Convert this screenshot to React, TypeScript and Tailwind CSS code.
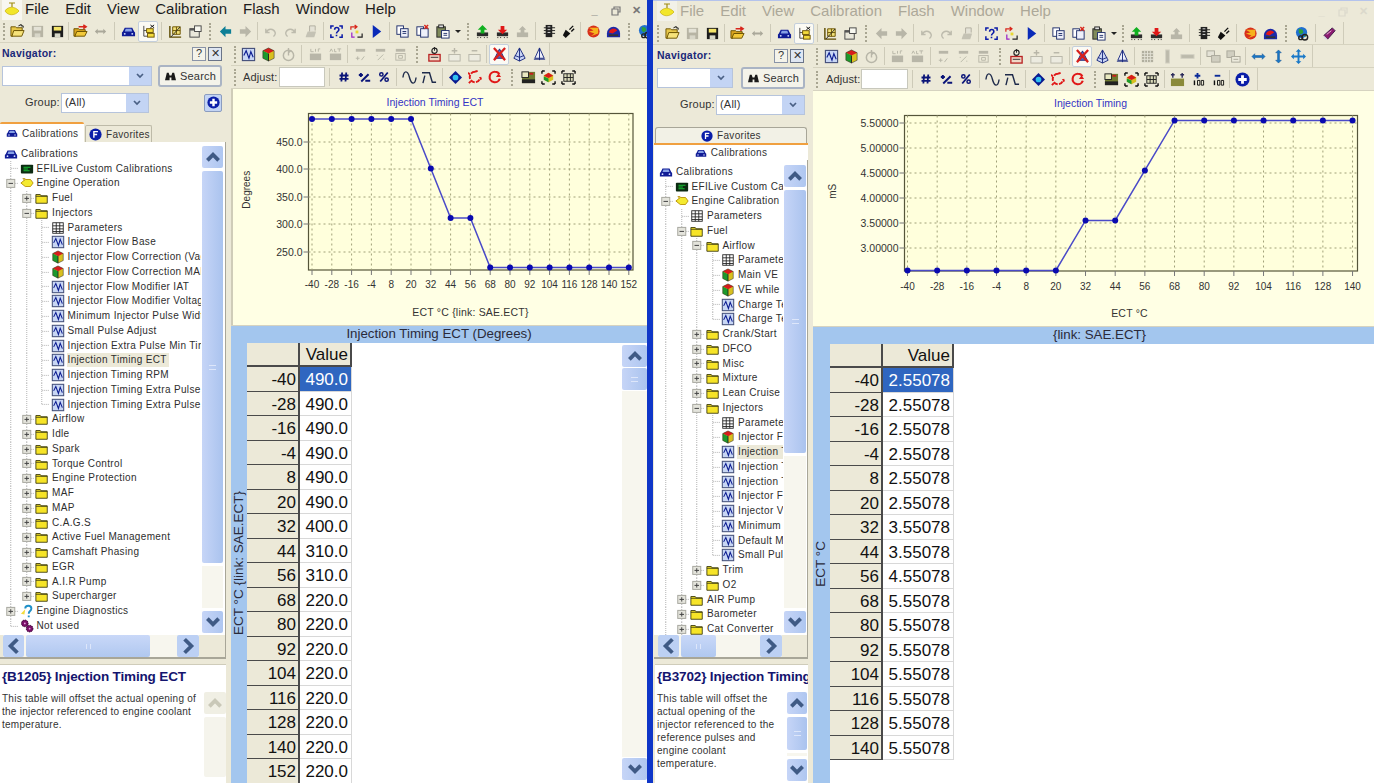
import type { ReactNode } from 'react';

const folderPath = 'M1 4h5l1 1.5h7V14H1z';
const I: Record<string, ReactNode> = {
  open: <><path d="M1 3h5l1 1h6v3H5L3 13H1z" fill="#e8c84a" stroke="#6b5200" /><path d="M4 7h11l-2.500 6H2z" fill="#f6e27a" stroke="#6b5200" /><path d="M9 2l3-1.500v1.500h2v2" fill="none" stroke="#111" /></>,
  saveG: <><rect x="2" y="2" width="12" height="12" fill="#b7b4a4" /><rect x="4" y="3" width="8" height="4" fill="#e4e2d6" /><rect x="5" y="10" width="6" height="4" fill="#d8d6c8" /></>,
  saveB: <><rect x="2" y="2" width="12" height="12" fill="#1b1b1b" /><rect x="4" y="3" width="8" height="4" fill="#f4e46a" /><rect x="5" y="10" width="6" height="4" fill="#d7d7c8" /></>,
  openR: <><path d="M1 5h5l1 1h6v2H5l-2 5H1z" fill="#d9a520" stroke="#6b5200" /><path d="M4 8h11l-2.500 5H2z" fill="#f2c93a" stroke="#6b5200" /><path d="M6 3h7M11 1l3 2-3 2" fill="none" stroke="#d8261c" strokeWidth="1.600" /></>,
  arrows: <path d="M2 8l3-3v2h6V5l3 3-3 3V9H5v2z" fill="#aaa89a" />,
  car: <><path d="M1 9l1-1 2-4h8l2 4 1 1v4H1z" fill="#101c96" /><path d="M5 5h6l1 3H4z" fill="#86a0e6" /><circle cx="4" cy="10.500" r="1" fill="#d7e0ff" /><circle cx="12" cy="10.500" r="1" fill="#d7e0ff" /></>,
  tree: <><path d="M3 2v11h4M3 7h4" fill="none" stroke="#444" /><rect x="6" y="5" width="7" height="4" fill="#f4dc3c" stroke="#6b5200" /><rect x="7" y="10" width="7" height="4" fill="#f4dc3c" stroke="#6b5200" /><path d="M10 1l4 3M14 1l-4 3" stroke="#111" /></>,
  grid: <><path d="M2 2v12h12" fill="none" stroke="#5c4a00" strokeWidth="1.500" /><path d="M5 3h8v8H5zM5 7h8M9 3v8" fill="#f2e27a" stroke="#6b5200" /><path d="M3 14l10-11" stroke="#2c2c2c" /></>,
  prop: <><rect x="2" y="5" width="10" height="9" fill="#e9e7da" stroke="#444" /><rect x="2" y="5" width="10" height="2" fill="#555" /><rect x="7" y="2" width="7" height="6" fill="#f8f8f0" stroke="#444" /></>,
  left: <path d="M2 8l6-6v3.500h6v5H8V14z" fill="#0d7f96" />,
  leftG: <path d="M2 8l6-6v3.500h6v5H8V14z" fill="#b8b6a8" />,
  rightG: <path d="M14 8L8 2v3.500H2v5h6V14z" fill="#b8b6a8" />,
  undo: <path d="M3 5v4h4M3.500 9C5 5 11 4 13 9c.5 2-1 4-2 4" fill="none" stroke="#bdbbad" strokeWidth="1.500" />,
  redo: <path d="M13 5v4H9M12.500 9C11 5 5 4 3 9c-.5 2 1 4 2 4" fill="none" stroke="#bdbbad" strokeWidth="1.500" />,
  docG: <><path d="M3 13l2-5h9l-2 6H3z" fill="#c4c2b4" /><path d="M7 8V2h6v5" fill="#e4e2d6" stroke="#b0aea0" /></>,
  help: <><path d="M5 2H2v3M11 2h3v3M5 14H2v-3M11 14h3v-3" fill="none" stroke="#0a1aa8" strokeWidth="1.600" /><path d="M6 6c0-3 4.500-3 4.500 0 0 2-2.500 2-2.500 4M8 11.500V13" fill="none" stroke="#0a1aa8" strokeWidth="1.700" /></>,
  swap: <><path d="M2 6V3h6M6 1l2.500 2L6 5" fill="none" stroke="#d8261c" strokeWidth="1.300" /><path d="M3 9v5h3" fill="none" stroke="#9a22c8" strokeWidth="1.300" /><path d="M14 10v4H9" fill="none" stroke="#222" strokeWidth="1.300" /><rect x="7" y="7" width="3" height="3" fill="#e8d830" /></>,
  play: <path d="M4 1l9 7-9 7z" fill="#0a2ab8" />,
  copy: <><rect x="2" y="2" width="7" height="9" fill="#fff" stroke="#1d2d6a" /><rect x="6" y="5" width="8" height="9" fill="#eef0fa" stroke="#1d2d6a" /><path d="M8 8h4M8 10h4" stroke="#1d2d6a" /></>,
  copy2: <><rect x="2" y="3" width="7" height="9" fill="#fff" stroke="#1d2d6a" /><rect x="6" y="5" width="8" height="9" fill="#eef0fa" stroke="#1d2d6a" /><path d="M10 1l4 4M14 1l-4 4" stroke="#d8261c" strokeWidth="1.500" /></>,
  paste: <><rect x="2" y="3" width="9" height="11" fill="#7f8a5a" stroke="#222" /><rect x="4" y="1" width="5" height="3" fill="#ddd" stroke="#222" /><rect x="7" y="7" width="8" height="8" fill="#fff" stroke="#1d2d6a" /><path d="M9 10h4M9 12h4" stroke="#1d2d6a" /></>,
  chipG: <><path d="M2 9h12v4H2z" fill="#2c2c2c" /><path d="M3 14v1M6 14v1M10 14v1M13 14v1" stroke="#222" /><path d="M8 1l5 5h-3v4H6V6H3z" fill="#10b020" /></>,
  chipR: <><path d="M2 9h12v4H2z" fill="#2c2c2c" /><path d="M3 14v1M6 14v1M10 14v1M13 14v1" stroke="#222" /><path d="M8 1l5 5h-3v4H6V6H3z" fill="#e01818" transform="rotate(180 8 6)" /></>,
  chipGy: <><path d="M2 9h12v5H2z" fill="#b8b6a8" /><path d="M8 2l4 4h-2v4H6V6H4z" fill="#b8b6a8" /></>,
  jack: <><rect x="5" y="1" width="7" height="13" fill="#222" /><path d="M3 4h12M3 7h12M3 10h12" stroke="#222" /><path d="M7 3h3M7 6h3M7 9h3" stroke="#ddd" /></>,
  plug: <><path d="M2 12l3-6 5 4-5 5z" fill="#111" /><path d="M9 6l4-4M11 8l3-3" stroke="#111" strokeWidth="1.500" /></>,
  burn: <><circle cx="8" cy="8" r="6.500" fill="#d8301c" /><path d="M3 4l5 3-5 1 6 2-4 3 8-3V4z" fill="#f6b21c" /></>,
  gauge: <><path d="M1 10a7 7 0 0114 0v4H1z" fill="#1c2aa8" /><path d="M3 9a5 5 0 019-2l-5 3z" fill="#e01818" /><path d="M3 11h10v2H3z" fill="#333" /></>,
  globe: <><circle cx="7" cy="7" r="6" fill="#2070d0" /><path d="M4 3l4 1 1 3-3 2-2-2zM9 9l3-1-1 4z" fill="#2ea03a" /><circle cx="10.500" cy="12" r="3" fill="none" stroke="#222" strokeWidth="1.500" /><circle cx="6" cy="12.500" r="2" fill="none" stroke="#222" strokeWidth="1.500" /></>,
  book: <><path d="M2 10l9-8 3 3-8 9z" fill="#8b1a70" stroke="#40204a" /><path d="M2 10l1 4h3z" fill="#d8d4e8" /><path d="M5 9l5-4" stroke="#e9b0d8" /></>,
  chart: <><rect x="1.500" y="1.500" width="13" height="13" fill="#c8d6f4" stroke="#45507a" strokeWidth="1.200" /><path d="M3 9l2.500-5 3 8 2-7 2.500 6" fill="none" stroke="#0a1a90" strokeWidth="1.200" /></>,
  cube: <><path d="M8 1l6 3v8l-6 3-6-3V4z" fill="#d8c020" /><path d="M8 1l6 3-6 3-6-3z" fill="#d81c1c" /><path d="M2 4l6 3v8l-6-3z" fill="#1c9a2c" /><path d="M8 7v8" stroke="#222" /><path d="M2 4l6-3 6 3v8l-6 3-6-3z" fill="none" stroke="#333" strokeWidth=".6" /></>,
  hist: <><circle cx="8" cy="9" r="5.500" fill="none" stroke="#b8b6a8" strokeWidth="1.600" /><path d="M8 1v5l3-2.500M8 9V6" stroke="#b8b6a8" strokeWidth="1.500" fill="none" /></>,
  cal: <><rect x="2" y="7" width="12" height="7" fill="#b8b6a8" /><path d="M3 2v3h3M8 5V2M8 2h0M11 5V2h2" fill="none" stroke="#b8b6a8" /></>,
  alt: <><rect x="2" y="7" width="12" height="7" fill="#b8b6a8" /><path d="M2 5l1.500-3L5 5M7 2v3h2M10 2h4M12 2v3" fill="none" stroke="#b8b6a8" /></>,
  d1: <><rect x="3" y="2" width="10" height="3" fill="#b8b6a8" /><path d="M3 12h4M5 10v4M9 14l3-4" stroke="#b8b6a8" /></>,
  d2: <><rect x="3" y="2" width="10" height="3" fill="#b8b6a8" /><path d="M5 14l6-6M4 9h1M11 13h1" stroke="#b8b6a8" /></>,
  d3: <><rect x="3" y="2" width="10" height="3" fill="#b8b6a8" /><rect x="3" y="7" width="10" height="7" fill="none" stroke="#b8b6a8" /><path d="M6 9h4v3H6z" fill="none" stroke="#b8b6a8" /></>,
  flash: <><rect x="2" y="8" width="12" height="7" fill="#f0d8c8" stroke="#b82020" strokeWidth="1.400" /><path d="M4 11h8" stroke="#333" /><circle cx="8" cy="4" r="2.800" fill="none" stroke="#222" strokeWidth="1.200" /><path d="M8 0v4" stroke="#222" /></>,
  addG: <><rect x="2" y="8" width="12" height="7" fill="#ecebe0" stroke="#b8b6a8" /><path d="M8 1v6M5 4h6" stroke="#b8b6a8" strokeWidth="1.500" /></>,
  subG: <><rect x="2" y="8" width="12" height="7" fill="#ecebe0" stroke="#b8b6a8" /><path d="M5 4h6" stroke="#b8b6a8" strokeWidth="1.500" /></>,
  x3d: <><path d="M8 2l5 10H3z" fill="#5b6ac8" stroke="#1a2070" /><path d="M2 1l12 13M14 1L2 14" stroke="#d8201c" strokeWidth="2.400" /></>,
  cone1: <><path d="M8 1l6 11-6 3-6-3z" fill="#c8d4f4" stroke="#1a2a80" /><path d="M8 1v14M3 9l5 2 5-2" fill="none" stroke="#1a2a80" /></>,
  cone2: <><path d="M8 1l5 11H3z" fill="#eef0fa" stroke="#1a2a80" /><path d="M8 1v13M2 13h12" stroke="#1a2a80" /></>,
  gridG: <><rect x="2" y="2" width="12" height="12" fill="#b0ae9e" /><path d="M2 5h12M2 8h12M2 11h12M5 2v12M8 2v12M11 2v12" stroke="#e4e2d6" /></>,
  barV: <rect x="6" y="1" width="4" height="14" fill="#bcbaac" stroke="#d4d2c4" />,
  barH: <rect x="1" y="6" width="14" height="4" fill="#bcbaac" stroke="#d4d2c4" />,
  tbl1: <><rect x="1" y="2" width="8" height="6" fill="#e4e2d6" stroke="#aaa89a" /><rect x="6" y="7" width="9" height="7" fill="#d0cec0" stroke="#aaa89a" /></>,
  tbl2: <><rect x="1" y="2" width="8" height="7" fill="#d0cec0" stroke="#aaa89a" /><rect x="6" y="8" width="9" height="6" fill="#eceadc" stroke="#aaa89a" /><path d="M8 11h5" stroke="#aaa89a" /></>,
  arH: <path d="M1 8l3-3v2h8V5l3 3-3 3V9H4v2z" fill="#1878c8" stroke="#0a4a90" strokeWidth=".5" />,
  arV: <path d="M8 1l3 3H9v8h2l-3 3-3-3h2V4H5z" fill="#1878c8" stroke="#0a4a90" strokeWidth=".5" />,
  arAll: <path d="M8 0l3 3H9v4h4V5l3 3-3 3V9H9v4h2l-3 3-3-3h2V9H3v2L0 8l3-3v2h4V3H5z" fill="#1878c8" />,
  hash: <path d="M5.500 2L4.500 14M11 2l-1 12M2 6h12M2 10.500h12" stroke="#0a1478" strokeWidth="2.400" />,
  pm: <path d="M1 5h5M3.500 2.500v5M4 13L13 4M9 12h6" stroke="#0a1478" strokeWidth="2.400" />,
  pct: <><path d="M3 14L13 2" stroke="#0a1478" strokeWidth="2.400" /><circle cx="4.500" cy="4.500" r="2.200" fill="none" stroke="#0a1478" strokeWidth="2" /><circle cx="11.500" cy="11.500" r="2.200" fill="none" stroke="#0a1478" strokeWidth="2" /></>,
  wave: <path d="M1 8c1-8 5-8 7 0s6 8 7 0" fill="none" stroke="#1e2a4a" strokeWidth="1.500" />,
  step: <path d="M0 3h8l3 10h4M1 14l2-8" fill="none" stroke="#1e2a4a" strokeWidth="1.500" />,
  target: <><path d="M8 0l8 8-8 8-8-8z" fill="#0a1a90" /><circle cx="8" cy="8" r="3.500" fill="#30c0f0" /></>,
  ring: <path d="M8 2a6 6 0 106 6M8 2l3-1M14 8l1 3M2 5L0 3M3 13l-2 2" fill="none" stroke="#e01818" strokeWidth="2.200" strokeDasharray="5 1.500" />,
  rot: <><path d="M13.500 10A6 6 0 118 2c2 0 4 1 5 3" fill="none" stroke="#e01818" strokeWidth="2.400" /><path d="M15 8H9l3-4z" fill="#e01818" /></>,
  sel1: <><rect x="1" y="2" width="14" height="12" fill="#6f7a30" /><rect x="1" y="2" width="7" height="6" fill="#e8e8c0" stroke="#222" /><rect x="1" y="10" width="14" height="4" fill="#222" /><rect x="9" y="3" width="4" height="2" fill="#c81c1c" /></>,
  sel2: <><path d="M1 1h3M12 1h3M1 15h3M12 15h3M1 1v3M15 1v3M1 12v3M15 12v3" stroke="#111" strokeWidth="1.500" /><path d="M8 3l5 2.500v5L8 13l-5-2.500v-5z" fill="#d8c020" /><path d="M3 6l5 2.500L13 6 8 3z" fill="#d81c1c" /><path d="M8 9v4l-5-2.500V7z" fill="#1c9a2c" /></>,
  sel3: <><path d="M1 1h3M12 1h3M1 15h3M12 15h3M1 1v3M15 1v3M1 12v3M15 12v3" stroke="#111" strokeWidth="1.500" /><rect x="3" y="4" width="10" height="8" fill="#d8d8b8" stroke="#222" /><path d="M3 8h10M6.500 4v8M10 4v8" stroke="#222" /></>,
  flat: <><rect x="1" y="7" width="14" height="8" fill="#8a8a3a" /><path d="M1 3h4M3 1v5M11 3h4M13 1v5" stroke="#2a2a5a" strokeWidth="1.500" /></>,
  inc: <><path d="M8 1v6M5 4h6" stroke="#0a2a98" strokeWidth="2" /><rect x="4" y="9" width="1.500" height="5" fill="#111" /><path d="M8 9h2.500v5H8zM12 9h2.500v5H12z" fill="none" stroke="#111" /></>,
  dec: <><path d="M5 4h6" stroke="#0a2a98" strokeWidth="2" /><rect x="4" y="9" width="1.500" height="5" fill="#111" /><path d="M8 9h2.500v5H8zM12 9h2.500v5H12z" fill="none" stroke="#111" /></>,
  plus: <><circle cx="8" cy="8" r="7.500" fill="#0a1ea8" /><path d="M8 3.500v9M3.500 8h9" stroke="#fff" strokeWidth="3" /></>,
  favF: <><circle cx="8" cy="8" r="7.500" fill="#0a1ea8" /><path d="M6 12V4.500h5M6 8h4" fill="none" stroke="#fff" strokeWidth="1.700" /></>,
  efi: <><rect x="1" y="3" width="14" height="10" rx="1" fill="#0c2a12" /><path d="M4 6h8M4 8h5M4 10h7" stroke="#18d838" /></>,
  yellow: <><path d="M1 8l5-4h6l3 4-3 4H6z" fill="#f4ea30" stroke="#b89000" /><path d="M3 3h3M4.500 3v2" stroke="#b89000" /></>,
  folder: <><path d={folderPath} fill="#f6e428" stroke="#3c3a10" /><path d="M1 6h13" stroke="#3c3a10" /></>,
  table: <><rect x="2" y="2" width="12" height="12" fill="#fff" stroke="#222" /><path d="M2 5.500h12M2 9h12M2 12h12M6 2v12M10 2v12" stroke="#222" /></>,
  question: <><path d="M1 11l5-5-1 6z" fill="#f4dc3c" /><path d="M6 5c0-4 7-4 7 0 0 3-3 3-3 6M10 13v2" fill="none" stroke="#2090c8" strokeWidth="2.200" /></>,
  cogs: <><circle cx="5.500" cy="5" r="3.800" fill="#7a1068" stroke="#220022" strokeDasharray="1.500 1" /><circle cx="11" cy="11" r="3.800" fill="#7a1068" stroke="#220022" strokeDasharray="1.500 1" /><circle cx="5.500" cy="5" r="1" fill="#e8a0e0" /><circle cx="11" cy="11" r="1" fill="#e8a0e0" /></>,
  logo: <><path d="M1 9c3-5 10-5 14 0-4 5-11 5-14 0z" fill="#f2e62a" stroke="#c0a400" strokeWidth=".6" /><path d="M5 1h6M8 1v4" stroke="#a08c10" strokeWidth="1.200" /></>,
};

const Ico = ({ n, size = 'w-[16px] h-[16px]' }: { n: string; size?: string }) => (
  <svg viewBox="0 0 16 16" className={`${size} shrink-0`}>{I[n]}</svg>
);

const SEP: Record<string, string> = {
  s3: 'w-[3px]', s5: 'w-[5px]', s6: 'w-[6px]', s7: 'w-[7px]', s8: 'w-[8px]', s9: 'w-[9px]',
};
const GRIP: Record<string, string> = {
  g6: 'w-[6px]', g7: 'w-[7px]', g8: 'w-[8px]', g9: 'w-[9px]', g10: 'w-[10px]', g11: 'w-[11px]', g12: 'w-[12px]', g13: 'w-[13px]', g14: 'w-[14px]',
};
const SMALL: Record<string, string> = {
  hash: 'w-[12px] h-[12px]', pm: 'w-[13px] h-[13px]', pct: 'w-[12px] h-[12px]', target: 'w-[13px] h-[13px]', ring: 'w-[14px] h-[14px]', rot: 'w-[14px] h-[14px]',
};

function Bar({ items }: { items: string[] }) {
  return (
    <>
      {items.map((it, i) => {
        if (SEP[it]) return <div key={i} className={`${SEP[it]} h-[18px] flex justify-center shrink-0`}><div className="w-px h-full bg-[#cdcab8]" /></div>;
        if (GRIP[it]) return <div key={i} className={`${GRIP[it]} h-[17px] flex justify-center shrink-0`}><div className="h-full border-l-2 border-dotted border-[#a9a692]" /></div>;
        if (it === 'drop') return <div key={i} className="w-[12px] flex justify-center shrink-0"><div className="w-0 h-0 border-x-[3px] border-t-[3px] border-x-transparent border-t-[#222]" /></div>;
        const active = it.startsWith('!');
        const name = active ? it.slice(1) : it;
        return (
          <div key={i} className={`w-[20px] h-[21px] flex items-center justify-center shrink-0 ${active ? 'bg-[#fbfaf4] border border-[#c4cfdc] rounded-[2px]' : ''}`}>
            <Ico n={name} size={SMALL[name] ?? 'w-[15px] h-[15px]'} />
          </div>
        );
      })}
    </>
  );
}

const Menu = ({ dim }: { dim?: boolean }) => (
  <div className={`flex items-center gap-[16px] text-[15px] shrink-0 pb-[1px] ${dim ? 'h-[21px] pl-[4px] text-[#aca899]' : 'h-[20px] pl-[2px] text-[#1c1c1c]'}`}>
    <div className={`-mr-[13px] w-[20px] h-[20px] flex items-center justify-center ${dim ? 'bg-[#f2f1e8]' : 'bg-[#f8f7f0]'}`}><Ico n="logo" /></div>
    {['File', 'Edit', 'View', 'Calibration', 'Flash', 'Window', 'Help'].map((m) => <span key={m}>{m}</span>)}
  </div>
);

const Controls = ({ dim }: { dim?: boolean }) => (
  <div className={`flex items-center h-[20px] ${dim ? 'text-[#dbd9cc]' : 'text-[#777]'} text-[11px] font-bold`}>
    <span className="w-[21px] text-center">_</span>
    <span className="w-[21px] text-center">
      <svg viewBox="0 0 10 10" className="w-[10px] h-[10px] inline"><path d="M3 3V1h6v5H7M1 3h6v6H1z" fill="none" stroke="currentColor" strokeWidth="1.200" /></svg>
    </span>
    <span className="w-[21px] text-center">✕</span>
  </div>
);

const Chev = ({ dir, dim }: { dir: 'up' | 'down' | 'left' | 'right'; dim?: boolean }) => {
  const d = { up: 'M3 11l5-5 5 5', down: 'M3 5l5 5 5-5', left: 'M11 2L5 8l6 6', right: 'M5 2l6 6-6 6' }[dir];
  return <svg viewBox="0 0 16 16" className="w-[18px] h-[18px]"><path d={d} fill="none" stroke={dim ? '#c9c8b8' : '#3f5a85'} strokeWidth="3.400" /></svg>;
};

const SBtn = ({ dir, dim, h = 'h-[22px]' }: { dir: 'up' | 'down'; dim?: boolean; h?: string }) => (
  <div className={`${h} w-full shrink-0 flex items-center justify-center rounded-[2px] ${dim ? 'bg-[#f0efe4]' : 'bg-gradient-to-r from-[#c6d5f7] to-[#aec6f0]'}`}><Chev dir={dir} dim={dim} /></div>
);

function VScroll({ thumb, dim, className = '' }: { thumb: string; dim?: boolean; className?: string }) {
  return (
    <div className={`flex flex-col gap-[3px] ${className}`}>
      <SBtn dir="up" dim={dim} />
      <div className={`${thumb} flex items-center justify-center rounded-[2px] shrink-0 ${dim ? 'bg-[#f5f4ec]' : 'bg-gradient-to-r from-[#c6d5f7] to-[#aac3ee]'}`}>
        {!dim && <div className="w-[7px] h-[5px] border-y border-[#dde6fa]" />}
      </div>
      <div className={`flex-1 ${dim ? 'bg-[#f5f4ec]' : 'bg-[#f7f6ee]'}`} />
      <SBtn dir="down" dim={dim} />
    </div>
  );
}

function HScroll({ thumb, ml }: { thumb: string; ml: string }) {
  return (
    <div className="flex h-[22px] shrink-0 bg-[#ece9d8]">
      <div className={`flex ${ml} gap-[2px] bg-[#f7f6ee]`}>
        <div className="w-[21px] h-[22px] flex items-center justify-center bg-[#bcd0f4] rounded-[2px]"><Chev dir="left" /></div>
        <div className={`${thumb} h-[22px] bg-gradient-to-b from-[#c9d8f8] to-[#b0c8f0] rounded-[2px] flex items-center justify-center`}><div className="h-[5px] w-[5px] border-x border-[#dde6fa]" /></div>
        <div className="flex-1" />
        <div className="w-[22px] h-[22px] flex items-center justify-center bg-[#bcd0f4] rounded-[2px]"><Chev dir="right" /></div>
      </div>
    </div>
  );
}

type Node = [number, string, string, ('+' | '-' | '')?, boolean?];

const inj = (names: [string, string][], d: number): Node[] => names.map(([i, t]) => [d, i, t]);
const folders = (names: string[], d: number): Node[] => names.map((t) => [d, 'folder', t, '+']);

const leftTree: Node[] = [
  [0, 'car', 'Calibrations'],
  [1, 'efi', 'EFILive Custom Calibrations'],
  [1, 'yellow', 'Engine Operation', '-'],
  [2, 'folder', 'Fuel', '+'],
  [2, 'folder', 'Injectors', '-'],
  ...inj([
    ['table', 'Parameters'], ['chart', 'Injector Flow Base'], ['cube', 'Injector Flow Correction (Vac)'],
    ['cube', 'Injector Flow Correction MAF'], ['chart', 'Injector Flow Modifier IAT'],
    ['chart', 'Injector Flow Modifier Voltage'], ['chart', 'Minimum Injector Pulse Width'], ['chart', 'Small Pulse Adjust'],
    ['chart', 'Injection Extra Pulse Min Time'],
  ], 3),
  [3, 'chart', 'Injection Timing ECT', '', true],
  ...inj([['chart', 'Injection Timing RPM'], ['chart', 'Injection Timing Extra Pulse'], ['chart', 'Injection Timing Extra Pulse']], 3),
  ...folders(['Airflow', 'Idle', 'Spark', 'Torque Control', 'Engine Protection', 'MAF', 'MAP', 'C.A.G.S', 'Active Fuel Management', 'Camshaft Phasing', 'EGR', 'A.I.R Pump', 'Supercharger'], 2),
  [1, 'question', 'Engine Diagnostics', '+'],
  [1, 'cogs', 'Not used'],
];

const rightTree: Node[] = [
  [0, 'car', 'Calibrations'],
  [1, 'efi', 'EFILive Custom Calibrations'],
  [1, 'yellow', 'Engine Calibration', '-'],
  [2, 'table', 'Parameters'],
  [2, 'folder', 'Fuel', '-'],
  [3, 'folder', 'Airflow', '-'],
  ...inj([['table', 'Parameters'], ['cube', 'Main VE'], ['cube', 'VE while'], ['chart', 'Charge Temp A'], ['chart', 'Charge Temp B']], 4),
  ...folders(['Crank/Start', 'DFCO', 'Misc', 'Mixture', 'Lean Cruise'], 3),
  [3, 'folder', 'Injectors', '-'],
  [4, 'table', 'Parameters'],
  [4, 'cube', 'Injector Flow'],
  [4, 'chart', 'Injection Timing', '', true],
  ...inj([['chart', 'Injection Timing'], ['chart', 'Injection Timing'], ['chart', 'Injector Flow'], ['chart', 'Injector Voltage'], ['chart', 'Minimum Pulse'], ['chart', 'Default MAF'], ['chart', 'Small Pulse']], 4),
  ...folders(['Trim', 'O2'], 3),
  ...folders(['AIR Pump', 'Barometer', 'Cat Converter', 'Cooling'], 2),
  [1, 'question', 'Engine Diagnostics', '+'],
];

function hasNext(list: Node[], r: number, level: number) {
  for (let j = r + 1; j < list.length; j++) {
    if (list[j][0] < level) return false;
    if (list[j][0] === level) return true;
  }
  return false;
}

function Tree({ data, pad }: { data: Node[]; pad: string }) {
  return (
    <div className="flex-1 min-w-0 overflow-hidden pt-[4.5px]">
      {data.map((n, r) => {
        const [d, icon, label, box, sel] = n;
        const cols = [];
        for (let i = 1; i <= d; i++) {
          const next = hasNext(data, r, i);
          const last = i === d;
          cols.push(
            <svg key={i} viewBox="0 0 15.5 14.75" className="w-[15.5px] h-[14.75px] shrink-0">
              <path d={`M7.75 0V${next ? 14.75 : last ? 7.4 : 0}${last ? 'M7.75 7.4H15.5' : ''}`} stroke="#b4b4b4" strokeDasharray="1 1" fill="none" />
              {last && box && (
                <>
                  <rect x="3.750" y="3.400" width="8" height="8" fill="#e4e4dc" stroke="#a8a8a0" />
                  <path d={box === '+' ? 'M5.500 7.400h4.500M7.750 5.200v4.400' : 'M5.500 7.400h4.500'} stroke="#444" />
                </>
              )}
            </svg>,
          );
        }
        return (
          <div key={r} className={`flex items-center h-[14.75px] whitespace-nowrap ${pad}`}>
            {cols}
            <Ico n={icon} size="w-[14px] h-[14px] mx-[1px]" />
            <span className={`ml-[1px] pl-[1px] pr-[2px] text-[10px] tracking-[0.35px] text-[#2e2e2e] leading-[14px] ${sel ? 'bg-[#ece9d8]' : ''}`}>{label}</span>
          </div>
        );
      })}
    </div>
  );
}

const Combo = ({ w, text }: { w: string; text?: string }) => (
  <div className={`${w} h-[20px] bg-white border border-[#b6c4dc] flex items-center justify-between`}>
    <span className="pl-[3px] text-[11px] text-[#333] tracking-[0.2px]">{text}</span>
    <div className="w-[22px] h-full bg-[#c3d4f4] flex items-center justify-center">
      <svg viewBox="0 0 8 6" className="w-[8px] h-[6px]"><path d="M1 1l3 3 3-3" fill="none" stroke="#4a6085" strokeWidth="1.700" /></svg>
    </div>
  </div>
);

function Sidebar({ right }: { right?: boolean }) {
  return (
    <aside className={`${right ? 'w-[160px]' : 'w-[231px]'} shrink-0 flex flex-col bg-[#ece9d8] h-full`}>
      <div className={`h-[21px] flex items-center shrink-0 ${right ? 'pl-[4px] pr-[9px]' : 'pl-[2px] pr-[9px]'}`}>
        <span className="text-[10.5px] font-bold text-[#1a2878] tracking-[0.25px]">Navigator:</span>
        <div className="ml-auto flex gap-[2px]">
          <div className="w-[14px] h-[14px] bg-[#f4f3ea] border border-[#8a94a8] flex items-center justify-center text-[11px] leading-none text-[#333]">?</div>
          <div className="w-[14px] h-[14px] bg-[#dfe6f2] border border-[#6a7488] flex items-center justify-center text-[11px] leading-none text-[#333]">✕</div>
        </div>
      </div>
      <div className={`h-[24px] flex items-center shrink-0 ${right ? 'pl-[4px] gap-[8px]' : 'pl-[2px] gap-[6px]'}`}>
        <Combo w={right ? 'w-[76px]' : 'w-[150px]'} />
        <div className="w-[64px] h-[22px] bg-[#f4f3ea] border-2 border-[#aab4c4] rounded-[3px] flex items-center justify-center gap-[3px] text-[11px] text-[#333] tracking-[0.2px]">
          <svg viewBox="0 0 14 12" className="w-[13px] h-[11px]"><path d="M1 10l2-8h2l1 3h2l1-3h2l2 8H8V7H6v3z" fill="#1a1a1a" /></svg>
          Search
        </div>
      </div>
      <div className={`mt-[3px] h-[23px] flex items-center shrink-0 ${right ? 'pl-[27px]' : 'pl-[25px]'}`}>
        <span className="text-[11px] text-[#333] tracking-[0.2px] w-[36px]">Group:</span>
        <Combo w={right ? 'w-[89px]' : 'w-[88px]'} text="(All)" />
        {!right && <div className="ml-[55px] w-[18px] h-[18px] bg-[#c3d4f4] border border-[#8a9cc0] rounded-[2px] flex items-center justify-center"><Ico n="plus" size="w-[13px] h-[13px]" /></div>}
      </div>
      {right ? (
        <div className="mt-[11px] flex flex-col shrink-0">
          <div className="ml-[2px] mr-[6px] h-[16px] bg-[#f2f1e6] border border-[#a8a698] border-b-0 rounded-t-[3px] flex items-center justify-center gap-[4px] text-[10px] tracking-[0.3px] text-[#333]"><Ico n="favF" size="w-[12px] h-[12px]" />Favorites</div>
          <div className="ml-[1px] mr-[5px] h-[17px] bg-white border-t-2 border-[#f0a040] flex items-center justify-center gap-[4px] text-[10px] tracking-[0.3px] text-[#333]"><Ico n="car" size="w-[12px] h-[12px]" />Calibrations</div>
        </div>
      ) : (
        <div className="mt-[8px] h-[20px] flex items-end shrink-0">
          <div className="w-[84px] h-[20px] bg-white border-t-2 border-[#f0a040] rounded-t-[2px] flex items-center pl-[6px] gap-[4px] text-[10px] tracking-[0.3px] text-[#333]"><Ico n="car" size="w-[12px] h-[12px]" />Calibrations</div>
          <div className="ml-[1px] w-[67px] h-[17px] bg-[#ece9d8] border border-b-0 border-[#bdbaa8] rounded-t-[2px] flex items-center pl-[3px] gap-[4px] text-[10px] tracking-[0.3px] text-[#333]"><Ico n="favF" size="w-[13px] h-[13px]" />Favorites</div>
        </div>
      )}
      <div className={`${right ? 'h-[499px] ml-[1px] mr-[5px]' : 'h-[517px] mr-[5px]'} bg-white border-r border-b-2 border-[#a8a698] flex flex-col shrink-0`}>
        <div className="flex-1 min-h-0 flex">
          <Tree data={right ? rightTree : leftTree} pad={right ? 'pl-[4px]' : 'pl-[3px]'} />
          <VScroll thumb={right ? 'h-[263px]' : 'h-[392px]'} className={right ? 'w-[22px] mr-[1px] ml-[1px] pt-[5px] pb-[2px]' : 'w-[21px] mr-[2px] ml-[1px] pt-[4px] pb-[2px]'} />
        </div>
        <HScroll ml={right ? 'ml-[4px] w-[124px]' : 'ml-[3px] w-[196px]'} thumb={right ? 'w-[35px]' : 'w-[124px]'} />
      </div>
      <div className={`mt-[5px] flex-1 min-h-0 bg-white border-t border-[#cfccba] overflow-hidden flex flex-col ${right ? 'ml-[2px] mr-[5px]' : 'mr-[5px]'}`}>
        <div className="h-[24px] flex items-center whitespace-nowrap text-[13.5px] font-bold text-[#14146e] tracking-[-0.15px] shrink-0 pl-[2px]">
          {right ? '{B3702} Injection Timing' : '{B1205} Injection Timing ECT'}
        </div>
        <div className="flex-1 min-h-0 flex">
          <p className="flex-1 min-w-0 pl-[2px] pt-[3px] text-[10px] leading-[13px] tracking-[0.26px] text-[#333]">
            {right
              ? 'This table will offset the actual opening of the injector referenced to the reference pulses and engine coolant temperature.'
              : 'This table will offset the actual opening of the injector referenced to engine coolant temperature.'}
          </p>
          <VScroll thumb={right ? 'h-[33px]' : 'h-[60px]'} dim={!right} className={right ? 'w-[20px] mr-[1px] pt-[3px] pb-[2px]' : 'w-[22px] pt-[3px] pb-[2px]'} />
        </div>
      </div>
    </aside>
  );
}

type ChartProps = {
  x0: number; y0: number; w: number; h: number; box: [number, number, number, number];
  title: string; titleX: number; titleY: number; xLabel: string; xLabelX: number; xLabelY: number; yLabel: string; yLabelX: number;
  xs: number[]; px0: number; dx: number; values: number[]; toY: (v: number) => number;
  yTicks: [string, number][]; xTickY: number;
};

function Chart(p: ChartProps) {
  const [l, t, r, b] = p.box;
  const pts = p.values.map((v, i) => [p.px0 + i * p.dx, p.toY(v)]);
  return (
    <svg viewBox={`${p.x0} ${p.y0} ${p.w} ${p.h}`} className="w-full h-full block" fontFamily="Liberation Sans, Arial, sans-serif">
      <rect x={l} y={t} width={r - l} height={b - t} fill="#ffffdc" stroke="#55553a" strokeWidth="1.200" />
      {pts.map(([x], i) => (
        <g key={i}>
          <path d={`M${x} ${t}V${b}`} stroke="#a0a078" strokeDasharray="2 3" />
          <path d={`M${x} ${b}v5`} stroke="#777" />
          <text x={x} y={p.xTickY} textAnchor="middle" fontSize="10" fill="#333">{p.xs[i]}</text>
        </g>
      ))}
      {p.yTicks.map(([s, y]) => (
        <g key={s}>
          <path d={`M${l} ${y}H${r}`} stroke="#a0a078" strokeDasharray="2 3" />
          <path d={`M${l - 5} ${y}h5`} stroke="#777" />
          <text x={l - 6} y={y + 3.500} textAnchor="end" fontSize="10.500" fill="#333">{s}</text>
        </g>
      ))}
      <polyline points={pts.map((q) => q.join(',')).join(' ')} fill="none" stroke="#4a4ac8" strokeWidth="1.500" />
      {pts.map(([x, y], i) => <circle key={i} cx={x} cy={y} r="3" fill="#0a0ab0" />)}
      <text x={p.titleX} y={p.titleY} textAnchor="middle" fontSize="10.500" fill="#3434c4">{p.title}</text>
      <text x={p.xLabelX} y={p.xLabelY} textAnchor="middle" fontSize="10.500" fill="#333" letterSpacing=".2">{p.xLabel}</text>
      <text transform={`translate(${p.yLabelX} ${(t + b) / 2 - 2}) rotate(-90)`} textAnchor="middle" fontSize="10" fill="#333">{p.yLabel}</text>
    </svg>
  );
}

function DataTable({ rows, valW, title, side, scroll, strip, barExtra = '' }: { rows: [number, string][]; valW: string; title: string; side: string; scroll?: boolean; strip: string; barExtra?: string }) {
  return (
    <div className="flex-1 min-h-0 flex flex-col overflow-hidden">
      <div className={`h-[17px] shrink-0 bg-[#a3c6ee] flex items-center justify-center text-[13.3px] text-[#2a2a3a] pb-[1px] ${barExtra}`}>{title}</div>
      <div className="flex-1 min-h-0 flex bg-white">
        <div className={`${strip} shrink-0 bg-[#a3c6ee] flex items-center justify-center`}>
          <span className="[writing-mode:vertical-rl] rotate-180 text-[13.5px] text-[#2a2a3a] whitespace-nowrap">{side}</span>
        </div>
        <div className={`grid grid-cols-[53px_1fr] ${valW} content-start text-[17px] text-[#111] shrink-0`}>
          <div className="h-[24px] bg-[#ece9d8] border-r-2 border-b-2 border-[#4a4a4a]" />
          <div className="h-[24px] bg-[#ece9d8] border-r-2 border-b-2 border-[#4a4a4a] text-right pr-[2px] leading-[23px]">Value</div>
          {rows.map(([k, v], i) => (
            <div key={k} className="contents">
              <div className="h-[24.5px] bg-[#ece9d8] border-r-2 border-b border-[#4a4a4a] text-right pr-[2px] leading-[26px]">{k}</div>
              <div className={`h-[24.5px] border-r border-b border-[#d8d8d8] text-right pr-[3px] leading-[26px] ${i === 0 ? 'bg-[#2f66c0] text-white' : 'bg-white'}`}>{v}</div>
            </div>
          ))}
        </div>
        <div className="flex-1" />
        {scroll && <VScroll thumb="h-[22px]" className="w-[25px] shrink-0 pt-[2px] pb-[3px] !gap-[1px]" />}
      </div>
    </div>
  );
}

const toolbarCls = 'h-[23px] flex items-center bg-[#ece9d8] border-b border-[#d6d3c0] shrink-0 overflow-hidden';

const xsL = [-40, -28, -16, -4, 8, 20, 32, 44, 56, 68, 80, 92, 104, 116, 128, 140, 152];
const valsL = [490, 490, 490, 490, 490, 490, 400, 310, 310, 220, 220, 220, 220, 220, 220, 220, 220];
const valsR = [2.55078, 2.55078, 2.55078, 2.55078, 2.55078, 2.55078, 3.55078, 3.55078, 4.55078, 5.55078, 5.55078, 5.55078, 5.55078, 5.55078, 5.55078, 5.55078];

export default function App() {
  return (
    <div className="w-[1374px] h-[783px] overflow-hidden flex bg-[#ece9d8] font-['Liberation_Sans',Arial,sans-serif]">
      {/* Left window */}
      <div className="w-[647px] h-full flex flex-col shrink-0">
        <div className="flex justify-between items-center h-[20px] shrink-0">
          <Menu />
          <Controls />
        </div>
        <div className={toolbarCls}>
          <Bar items={['g7', 'open', 'saveG', 'saveB', 's3', 'openR', 'arrows', 's8', 'car', '!tree', 's7', 'grid', 'prop', 'g10', 'left', 'rightG', 's5', 'undo', 'redo', 'docG', 's6', 'help', 'swap', 'play', 's6', 'copy', 'copy2', 'paste', 'drop', 'g8', 'chipG', 'chipR', 'chipGy', 's6', 'jack', 'plug', 's5', 'burn', 'gauge', 'g12', 'globe']} />
        </div>
        <div className="flex-1 min-h-0 flex">
          <Sidebar />
          <div className="flex-1 min-w-0 flex flex-col">
            <div className={toolbarCls}>
              <Bar items={['g7', 'chart', 'cube', 'hist', 's7', 'cal', 'alt', 's5', 'd1', 'd2', 'd3', 'g14', 'flash', 'addG', 'subG', 's5', '!x3d', 'cone1', 'cone2']} />
              <div className="h-full border-r border-[#cfccba]" />
            </div>
            <div className={toolbarCls}>
              <div className="w-[8px] h-[17px] flex justify-center"><div className="h-full border-l-2 border-dotted border-[#a9a692]" /></div>
              <span className="ml-[4px] w-[36px] text-[11px] text-[#333] tracking-[0.1px]">Adjust:</span>
              <div className="w-[46px] h-[20px] bg-white border border-[#c8c8bc]" />
              <Bar items={['s9', 'hash', 'pm', 'pct', 's5', 'wave', 'step', 's6', 'target', 'ring', 'rot', 'g13', 'sel1', 'sel2', 'sel3']} />
            </div>
            <div className="h-[236px] shrink-0 bg-[#ffffe4] border-l-2 border-[#cfccb8]">
              <Chart x0={233} y0={89} w={414} h={236} box={[308.5, 113.5, 633, 270]} title="Injection Timing ECT" titleX={435} titleY={106} xLabel="ECT °C {link: SAE.ECT}" xLabelX={470.5} xLabelY={316} yLabel="Degrees" yLabelX={250} xs={xsL} px0={312} dx={19.8} values={valsL} toY={(v) => 119 + (490 - v) * 0.55} yTicks={[['450.0', 142], ['400.0', 169], ['350.0', 197], ['300.0', 224], ['250.0', 252]]} xTickY={288} />
            </div>
            <div className="h-px bg-[#d6d3c0] shrink-0" />
            <DataTable rows={xsL.map((k, i) => [k, valsL[i].toFixed(1)])} valW="w-[105px]" title="Injection Timing ECT (Degrees)" side="ECT °C {link: SAE.ECT}" scroll strip="w-[16px]" />
          </div>
        </div>
      </div>

      <div className="w-[6px] h-full bg-[#0f36c8] shrink-0" />

      {/* Right window */}
      <div className="flex-1 min-w-0 h-full flex flex-col border-t border-[#b4c3ec]">
        <div className="flex justify-between items-center h-[21px] shrink-0">
          <Menu dim />
          <Controls dim />
        </div>
        <div className={toolbarCls}>
          <Bar items={['g9', 'open', 'saveG', 'saveB', 's5', 'openR', 'arrows', 's7', 'car', '!tree', 's6', 'grid', 'prop', 'g11', 'leftG', 'rightG', 's5', 'undo', 'redo', 'docG', 's5', 'help', 'swap', 'play', 's7', 'copy', 'copy2', 'paste', 'drop', 'g6', 'chipG', 'chipR', 'chipGy', 's7', 'jack', 'plug', 's7', 'burn', 'gauge', 'g12', 'globe', 's7', 'book']} />
          <div className="ml-[4px] h-full border-r border-[#cfccba]" />
        </div>
        <div className="flex-1 min-h-0 flex">
          <Sidebar right />
          <div className="flex-1 min-w-0 flex flex-col">
            <div className={toolbarCls}>
              <Bar items={['g8', 'chart', 'cube', 'hist', 's6', 'cal', 'alt', 's6', 'd1', 'd2', 'd3', 'g13', 'flash', 'addG', 'subG', 's6', '!x3d', 'cone1', 'cone2', 's5', 'gridG', 'barV', 'barH', 's6', 'tbl1', 'tbl2', 's5', 'arH', 'arV', 'arAll']} />
              <div className="ml-[4px] h-full border-r border-[#cfccba]" />
            </div>
            <div className={toolbarCls}>
              <div className="w-[8px] h-[17px] flex justify-center"><div className="h-full border-l-2 border-dotted border-[#a9a692]" /></div>
              <span className="ml-[5px] w-[35px] text-[11px] text-[#333] tracking-[0.1px]">Adjust:</span>
              <div className="w-[47px] h-[20px] bg-white border border-[#c8c8bc]" />
              <Bar items={['s8', 'hash', 'pm', 'pct', 's6', 'wave', 'step', 's6', 'target', 'ring', 'rot', 'g13', 'sel1', 'sel2', 'sel3', 's6', 'flat', 'inc', 'dec', 's5', 'plus']} />
              <div className="ml-[5px] h-full border-r border-[#cfccba]" />
            </div>
            <div className="h-[235px] shrink-0 bg-[#ffffe4]">
              <Chart x0={813} y0={91} w={560} h={235} box={[904, 115.500, 1357, 271]} title="Injection Timing" titleX={1090} titleY={107} xLabel="ECT °C" xLabelX={1129} xLabelY={317} yLabel="mS" yLabelX={835} xs={xsL.slice(0, 16)} px0={907} dx={29.67} values={valsR} toY={(v) => 123 + (5.5 - v) * 50} yTicks={[['5.50000', 123], ['5.00000', 148], ['4.50000', 173], ['4.00000', 198], ['3.50000', 223], ['3.00000', 248]]} xTickY={290} />
            </div>
            <div className="h-px bg-[#d6d3c0] shrink-0" />
            <DataTable rows={xsL.slice(0, 16).map((k, i) => [k, valsR[i].toFixed(5)])} valW="w-[124px]" title="{link: SAE.ECT}" side="ECT °C" strip="w-[17px]" barExtra="pl-[12px]" />
          </div>
        </div>
      </div>
    </div>
  );
}
